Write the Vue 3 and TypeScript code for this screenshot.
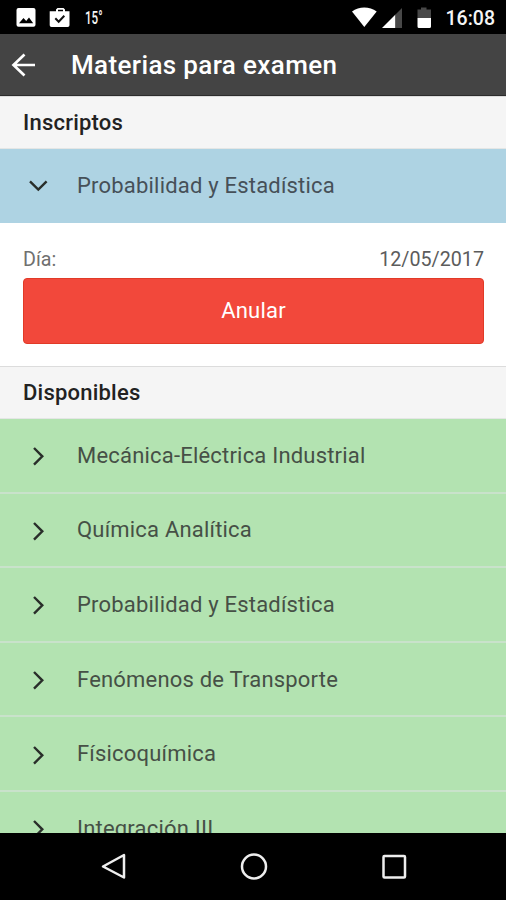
<script setup lang="ts">
interface Subject {
  name: string
}

const available: Subject[] = [
  { name: 'Mecánica-Eléctrica Industrial' },
  { name: 'Química Analítica' },
  { name: 'Probabilidad y Estadística' },
  { name: 'Fenómenos de Transporte' },
  { name: 'Físicoquímica' },
  { name: 'Integración III' },
]
</script>

<template>
  <div class="screen">
    <div class="status">
      <svg class="status-left" width="64" height="34" viewBox="0 0 64 34">
        <path fill="#fff" fill-rule="evenodd" d="M2.500 8h15a2 2 0 0 1 2 2v14.800a2 2 0 0 1-2 2h-15a2 2 0 0 1-2-2V10a2 2 0 0 1 2-2zM3 23.200h14.200l-4.200-5.600-2.800 3.300-2.700-3z" />
        <path fill="#fff" fill-rule="evenodd" d="M40 11.200V9.500L41.500 8h6L49 9.500v1.700h4.500v14a1.800 1.800 0 0 1-1.800 1.800H35.500a1.800 1.800 0 0 1-1.800-1.800v-14zM42 11.200h5V9.800h-5z" />
        <path fill="none" stroke="#111" stroke-width="2" d="M39.300 18.200l3.400 3.500 5.600-6" />
      </svg>
      <span class="temp">15°</span>
      <svg class="status-right" width="82" height="34" viewBox="0 0 82 34">
        <path fill="#fff" d="M0 11.500C7 6 17.500 6 24.700 11.500L12.300 27z" />
        <path fill="#fff" d="M30 28L43.500 14.500V28z" />
        <path fill="#484848" d="M43.500 14.500L50 8v20h-6.500z" />
        <path fill="#484848" d="M65.500 9.500h3.500V7.500h5.500v2h4.500V18H65.500z" />
        <path fill="#fff" d="M65.500 18H79v8.500a1.500 1.500 0 0 1-1.500 1.500H67a1.500 1.500 0 0 1-1.500-1.500z" />
      </svg>
      <span class="clock">16:08</span>
    </div>

    <header class="bar">
      <svg width="24" height="24" viewBox="0 0 24 24" fill="none" stroke="#fff" stroke-width="2.700">
        <path d="M24 12H2.500M13.500 1.500L2.500 12l11 10.500" />
      </svg>
      <h1>Materias para examen</h1>
    </header>

    <main class="content">
      <h2>Inscriptos</h2>
      <div class="row enrolled">
        <svg width="22" height="22" viewBox="0 0 22 22"><path d="M3 7.300l8.300 8.200 8.300-8.200" /></svg>
        <span>Probabilidad y Estadística</span>
      </div>
      <section class="detail">
        <div class="date"><span>Día:</span><span class="value">12/05/2017</span></div>
        <button type="button">Anular</button>
      </section>
      <h2>Disponibles</h2>
      <div v-for="subject in available" :key="subject.name" class="row">
        <svg width="22" height="22" viewBox="0 0 22 22"><path d="M7 4l8.300 8.300L7 20.600" /></svg>
        <span>{{ subject.name }}</span>
      </div>
    </main>

    <nav class="nav">
      <svg width="28" height="30" viewBox="0 0 28 30"><path d="M24 3v22.500L3 14.500z" /></svg>
      <svg width="28" height="30" viewBox="0 0 28 30"><circle cx="14" cy="14.500" r="12" /></svg>
      <svg width="28" height="30" viewBox="0 0 28 30"><rect x="3.500" y="4" width="21.500" height="21.500" rx="1" /></svg>
    </nav>
  </div>
</template>

<style>
body {
  margin: 0;
  overflow: hidden;
}
</style>

<style scoped>
.screen {
  width: 506px;
  height: 900px;
  display: flex;
  flex-direction: column;
  overflow: hidden;
  background: #fff;
  font-family: Roboto, "Liberation Sans", sans-serif;
}
svg {
  display: block;
  flex: none;
}
.status {
  flex: none;
  height: 34px;
  display: flex;
  align-items: center;
  padding: 0 11px 0 16px;
  background: #000;
  color: #f5f5f5;
}
.temp {
  margin-left: 5px;
  font-size: 17.500px;
  font-weight: 500;
  line-height: 34px;
  padding-top: 1px;
  transform: scaleX(0.660);
  transform-origin: left center;
}
.status-right {
  margin-left: auto;
}
.clock {
  width: 61px;
  text-align: right;
  font-size: 19.500px;
  line-height: 34px;
  font-weight: 500;
  padding-top: 3px;
}
.bar {
  flex: none;
  box-sizing: border-box;
  height: 62px;
  display: flex;
  align-items: center;
  padding: 0 11px;
  background: #444;
  border-bottom: 1px solid #2c2c2c;
  color: #fff;
}
h1 {
  margin: 0 0 0 36px;
  font-size: 26px;
  font-weight: 500;
  line-height: 60px;
  letter-spacing: 0.370px;
  white-space: nowrap;
}
.content {
  flex: 1;
  min-height: 0;
  overflow: hidden;
}
h2 {
  box-sizing: border-box;
  height: 53px;
  margin: 0;
  padding-left: 23px;
  border-top: 1px solid #dcdcdc;
  border-bottom: 1px solid #e4e6e5;
  background: #f5f5f5;
  color: #222;
  font-size: 22px;
  font-weight: 500;
  line-height: 51px;
  letter-spacing: 0.220px;
}
.row {
  box-sizing: border-box;
  height: 74.600px;
  display: flex;
  align-items: center;
  padding-left: 27px;
  border-bottom: 2px solid #c9e2cb;
  background: #b3e3b1;
  color: #465046;
  font-size: 22px;
  letter-spacing: 0.200px;
  white-space: nowrap;
}
.row svg {
  margin-right: 28px;
  fill: none;
  stroke: #292e2a;
  stroke-width: 2.400;
}
.enrolled {
  height: 74px;
  padding-bottom: 2px;
  border-bottom: 0;
  background: #aed3e3;
  color: #465058;
}
.detail {
  box-sizing: border-box;
  height: 143px;
  padding: 23px 22px 0 23px;
}
.date {
  height: 32px;
  display: flex;
  justify-content: space-between;
  color: #707070;
  font-size: 19.700px;
  line-height: 28px;
}
.value {
  color: #5c5c5c;
}
button {
  display: block;
  box-sizing: border-box;
  width: 100%;
  height: 65.500px;
  padding: 0;
  border: 1px solid #e13a27;
  border-radius: 4px;
  background: #f2483b;
  color: #fff;
  font: 400 22px/64px Roboto, "Liberation Sans", sans-serif;
  letter-spacing: 0.200px;
}
.nav {
  flex: none;
  box-sizing: border-box;
  height: 67px;
  display: flex;
  justify-content: center;
  gap: 112px;
  padding: 19px 0 0 1px;
  background: #000;
}
.nav svg {
  fill: none;
  stroke: #eee;
  stroke-width: 2.500;
  stroke-linejoin: round;
}
</style>
